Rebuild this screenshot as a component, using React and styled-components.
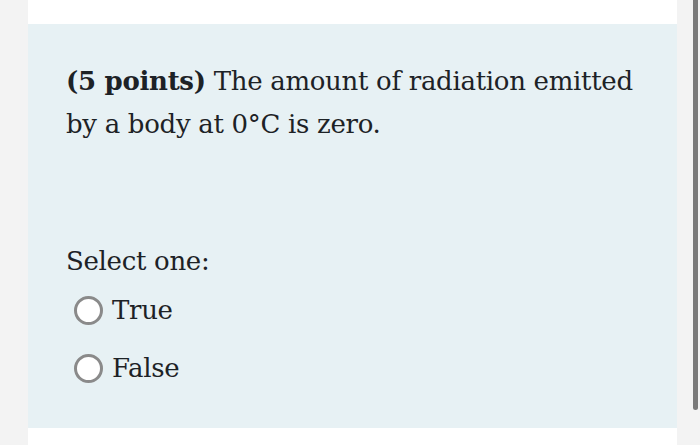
import React from "react";
import styled, { createGlobalStyle } from "styled-components";

const Global = createGlobalStyle`
  html, body {
    margin: 0;
    padding: 0;
    background: #f3f3f3;
    overflow: hidden;
  }
`;

const Page = styled.div`
  position: relative;
  height: 445px;
  padding: 0 23px 0 28px;
  box-sizing: border-box;
`;

const Card = styled.div`
  background: #ffffff;
  height: 100%;
  padding-top: 24px;
  box-sizing: border-box;
`;

const Panel = styled.div`
  background: #e7f1f4;
  height: 404px;
  box-sizing: border-box;
  padding: 36px 28px 0 38px;
  font-family: "DejaVu Serif", "Liberation Serif", serif;
  color: #1d2226;
`;

const QText = styled.p`
  margin: 0;
  font-size: 26px;
  line-height: 43px;
  letter-spacing: -0.3px;
`;

const Points = styled.strong`
  font-weight: bold;
`;

const Prompt = styled.div`
  margin-top: 94px;
  font-size: 26px;
  line-height: 43px;
  letter-spacing: -0.3px;
`;

const Options = styled.div`
  display: flex;
  flex-direction: column;
  gap: 16px;
  margin-top: 6px;
  padding-left: 8px;
`;

const Option = styled.label`
  display: flex;
  align-items: center;
  gap: 9px;
  height: 42px;
  font-size: 26px;
  letter-spacing: -0.3px;
`;

const Radio = styled.span`
  width: 23px;
  height: 23px;
  border: 3px solid #8a8a8a;
  border-radius: 50%;
  background: #ffffff;
  flex-shrink: 0;
`;

const Scrollbar = styled.div`
  position: absolute;
  top: 0;
  right: 2px;
  width: 5px;
  height: 410px;
  border-radius: 0 0 3px 3px;
  background: #7a7a7a;
`;

export default function App() {
  return (
    <>
      <Global />
      <Page>
        <Card>
          <Panel>
            <QText>
              <Points>(5 points)</Points> The amount of radiation emitted by a
              body at 0°C is zero.
            </QText>
            <Prompt>Select one:</Prompt>
            <Options>
              <Option>
                <Radio />
                True
              </Option>
              <Option>
                <Radio />
                False
              </Option>
            </Options>
          </Panel>
        </Card>
        <Scrollbar />
      </Page>
    </>
  );
}
